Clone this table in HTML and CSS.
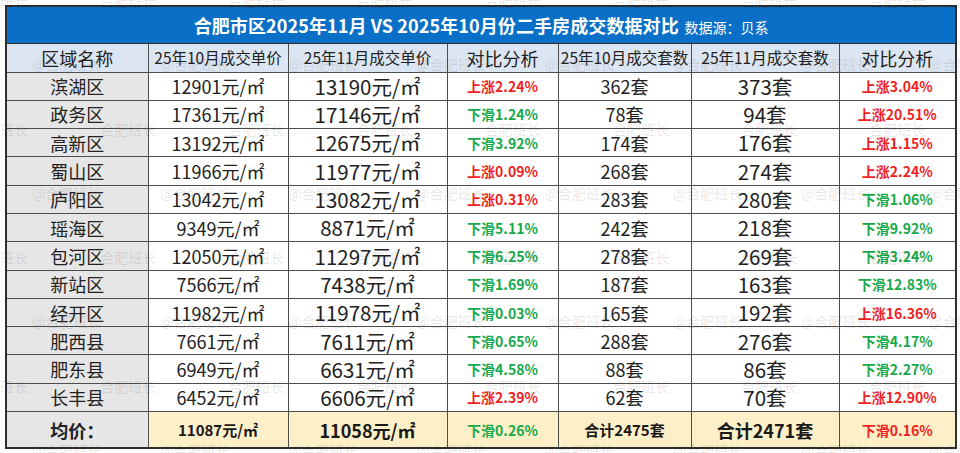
FILE: index.html
```html
<!DOCTYPE html>
<html lang="zh-CN">
<head>
<meta charset="utf-8">
<title>合肥市区二手房成交数据对比</title>
<link rel="stylesheet" href="styles.css">
</head>
<body>
<div class="sheet">
  <table class="grid">
    <colgroup>
      <col class="c1"><col class="c2"><col class="c3"><col class="c4"><col class="c5"><col class="c6"><col class="c7">
    </colgroup>
    <tr class="title-row">
      <td colspan="7"><span class="title">合肥市区2025年11月 VS 2025年10月份二手房成交数据对比</span> <span class="source">数据源：贝系</span></td>
    </tr>
    <tr class="head-row">
      <td class="big">区域名称</td>
      <td>25年10月成交单价</td>
      <td>25年11月成交单价</td>
      <td class="big">对比分析</td>
      <td>25年10月成交套数</td>
      <td>25年11月成交套数</td>
      <td class="big">对比分析</td>
    </tr>
    <tr class="row"><td class="name">滨湖区</td><td class="p1">12901元/㎡</td><td class="p2">13190元/㎡</td><td class="up">上涨2.24%</td><td class="n1">362套</td><td class="n2">373套</td><td class="up">上涨3.04%</td></tr>
    <tr class="row"><td class="name">政务区</td><td class="p1">17361元/㎡</td><td class="p2">17146元/㎡</td><td class="down">下滑1.24%</td><td class="n1">78套</td><td class="n2">94套</td><td class="up">上涨20.51%</td></tr>
    <tr class="row"><td class="name">高新区</td><td class="p1">13192元/㎡</td><td class="p2">12675元/㎡</td><td class="down">下滑3.92%</td><td class="n1">174套</td><td class="n2">176套</td><td class="up">上涨1.15%</td></tr>
    <tr class="row"><td class="name">蜀山区</td><td class="p1">11966元/㎡</td><td class="p2">11977元/㎡</td><td class="up">上涨0.09%</td><td class="n1">268套</td><td class="n2">274套</td><td class="up">上涨2.24%</td></tr>
    <tr class="row"><td class="name">庐阳区</td><td class="p1">13042元/㎡</td><td class="p2">13082元/㎡</td><td class="up">上涨0.31%</td><td class="n1">283套</td><td class="n2">280套</td><td class="down">下滑1.06%</td></tr>
    <tr class="row"><td class="name">瑶海区</td><td class="p1">9349元/㎡</td><td class="p2">8871元/㎡</td><td class="down">下滑5.11%</td><td class="n1">242套</td><td class="n2">218套</td><td class="down">下滑9.92%</td></tr>
    <tr class="row"><td class="name">包河区</td><td class="p1">12050元/㎡</td><td class="p2">11297元/㎡</td><td class="down">下滑6.25%</td><td class="n1">278套</td><td class="n2">269套</td><td class="down">下滑3.24%</td></tr>
    <tr class="row"><td class="name">新站区</td><td class="p1">7566元/㎡</td><td class="p2">7438元/㎡</td><td class="down">下滑1.69%</td><td class="n1">187套</td><td class="n2">163套</td><td class="down">下滑12.83%</td></tr>
    <tr class="row"><td class="name">经开区</td><td class="p1">11982元/㎡</td><td class="p2">11978元/㎡</td><td class="down">下滑0.03%</td><td class="n1">165套</td><td class="n2">192套</td><td class="up">上涨16.36%</td></tr>
    <tr class="row"><td class="name">肥西县</td><td class="p1">7661元/㎡</td><td class="p2">7611元/㎡</td><td class="down">下滑0.65%</td><td class="n1">288套</td><td class="n2">276套</td><td class="down">下滑4.17%</td></tr>
    <tr class="row"><td class="name">肥东县</td><td class="p1">6949元/㎡</td><td class="p2">6631元/㎡</td><td class="down">下滑4.58%</td><td class="n1">88套</td><td class="n2">86套</td><td class="down">下滑2.27%</td></tr>
    <tr class="row"><td class="name">长丰县</td><td class="p1">6452元/㎡</td><td class="p2">6606元/㎡</td><td class="up">上涨2.39%</td><td class="n1">62套</td><td class="n2">70套</td><td class="up">上涨12.90%</td></tr>
    <tr class="avg-row">
      <td class="name avg-name">均价：</td>
      <td class="a1">11087元/㎡</td>
      <td class="a2">11058元/㎡</td>
      <td class="down">下滑0.26%</td>
      <td class="a1">合计2475套</td>
      <td class="a2">合计2471套</td>
      <td class="up">下滑0.16%</td>
    </tr>
  </table>

  <div class="watermark" aria-hidden="true">
    <div class="wm-line plain"><span>合肥班长</span><span>合肥班长</span><span>合肥班长</span><span>合肥班长</span><span>合肥班长</span><span>合肥班长</span><span>合肥班长</span><span>合肥班长</span><span>合肥班长</span></div>
    <div class="wm-line at"><span>@合肥班长</span><span>@合肥班长</span><span>@合肥班长</span><span>@合肥班长</span><span>@合肥班长</span><span>@合肥班长</span><span>@合肥班长</span><span>@合肥班长</span></div>
    <div class="wm-line plain"><span>合肥班长</span><span>合肥班长</span><span>合肥班长</span><span>合肥班长</span><span>合肥班长</span><span>合肥班长</span><span>合肥班长</span><span>合肥班长</span><span>合肥班长</span></div>
    <div class="wm-line at"><span>@合肥班长</span><span>@合肥班长</span><span>@合肥班长</span><span>@合肥班长</span><span>@合肥班长</span><span>@合肥班长</span><span>@合肥班长</span><span>@合肥班长</span></div>
    <div class="wm-line plain"><span>合肥班长</span><span>合肥班长</span><span>合肥班长</span><span>合肥班长</span><span>合肥班长</span><span>合肥班长</span><span>合肥班长</span><span>合肥班长</span><span>合肥班长</span></div>
    <div class="wm-line at"><span>@合肥班长</span><span>@合肥班长</span><span>@合肥班长</span><span>@合肥班长</span><span>@合肥班长</span><span>@合肥班长</span><span>@合肥班长</span><span>@合肥班长</span></div>
    <div class="wm-line plain"><span>合肥班长</span><span>合肥班长</span><span>合肥班长</span><span>合肥班长</span><span>合肥班长</span><span>合肥班长</span><span>合肥班长</span><span>合肥班长</span><span>合肥班长</span></div>
    <div class="wm-line at"><span>@合肥班长</span><span>@合肥班长</span><span>@合肥班长</span><span>@合肥班长</span><span>@合肥班长</span><span>@合肥班长</span><span>@合肥班长</span><span>@合肥班长</span></div>
  </div>
</div>
</body>
</html>
```
FILE: styles.css
```css
html, body {
  margin: 0;
  padding: 0;
  background: #ffffff;
}

body {
  font-family: "Noto Sans CJK SC", "Noto Sans", sans-serif;
  color: #222222;
}

.sheet {
  position: relative;
  width: 960px;
  height: 453px;
  padding: 5px 0 0 5px;
  box-sizing: border-box;
  overflow: hidden;
}

.grid {
  border-collapse: collapse;
  table-layout: fixed;
  width: 950px;
  border: 2px solid #2e2e2e;
}

.c1 { width: 142px; }
.c2 { width: 140px; }
.c3 { width: 159px; }
.c4 { width: 111px; }
.c5 { width: 133px; }
.c6 { width: 148px; }
.c7 { width: 117px; }

.grid td {
  border: 1px solid #4d4d4d;
  padding: 0;
  text-align: center;
  vertical-align: middle;
  line-height: 1;
  white-space: nowrap;
  overflow: hidden;
}

.title-row {
  height: 37px;
}

.title-row td {
  background: #0a6fc6;
  color: #ffffff;
  border-color: #2e2e2e;
}

.title {
  font-size: 18px;
  font-weight: 700;
  letter-spacing: 0.1px;
}

.source {
  font-size: 14px;
  font-weight: 400;
  margin-left: 2px;
}

.head-row {
  height: 29px;
}

.head-row td {
  background: #dce6f2;
  font-size: 15.5px;
  color: #222222;
}

.head-row td.big {
  font-size: 18px;
}

.row {
  height: 28.3px;
}

.name {
  background: #e6e6e6;
  font-size: 18px;
  color: #222222;
}

.p1 {
  font-size: 18px;
  color: #222222;
}

.p2 {
  font-size: 20.5px;
  color: #222222;
}

.n1 {
  font-size: 18px;
  color: #222222;
}

.n2 {
  font-size: 20.5px;
  color: #222222;
}

.up {
  font-size: 14px;
  font-weight: 700;
  color: #f01f1f;
}

.down {
  font-size: 14px;
  font-weight: 700;
  color: #17a94b;
}

.avg-row {
  height: 36.6px;
}

.avg-row td {
  background: #fdf0c9;
}

.avg-row td.avg-name {
  background: #e6e6e6;
  font-weight: 700;
}

.a1 {
  font-size: 15px;
  font-weight: 700;
  color: #1a1a1a;
}

.a2 {
  font-size: 18px;
  font-weight: 700;
  color: #1a1a1a;
}

/* watermark overlay */
.watermark {
  position: absolute;
  left: 0;
  top: -32px;
  width: 960px;
  pointer-events: none;
  display: flex;
  flex-direction: column;
  color: rgba(0, 0, 0, 0.11);
  font-size: 14px;
}

.wm-line {
  height: 64.3px;
  line-height: 64.3px;
  display: flex;
  white-space: nowrap;
}

.wm-line span {
  flex: 0 0 128.2px;
}

.wm-line.at {
  margin-left: 32px;
}

.wm-line.plain {
  margin-left: -28px;
}
```
